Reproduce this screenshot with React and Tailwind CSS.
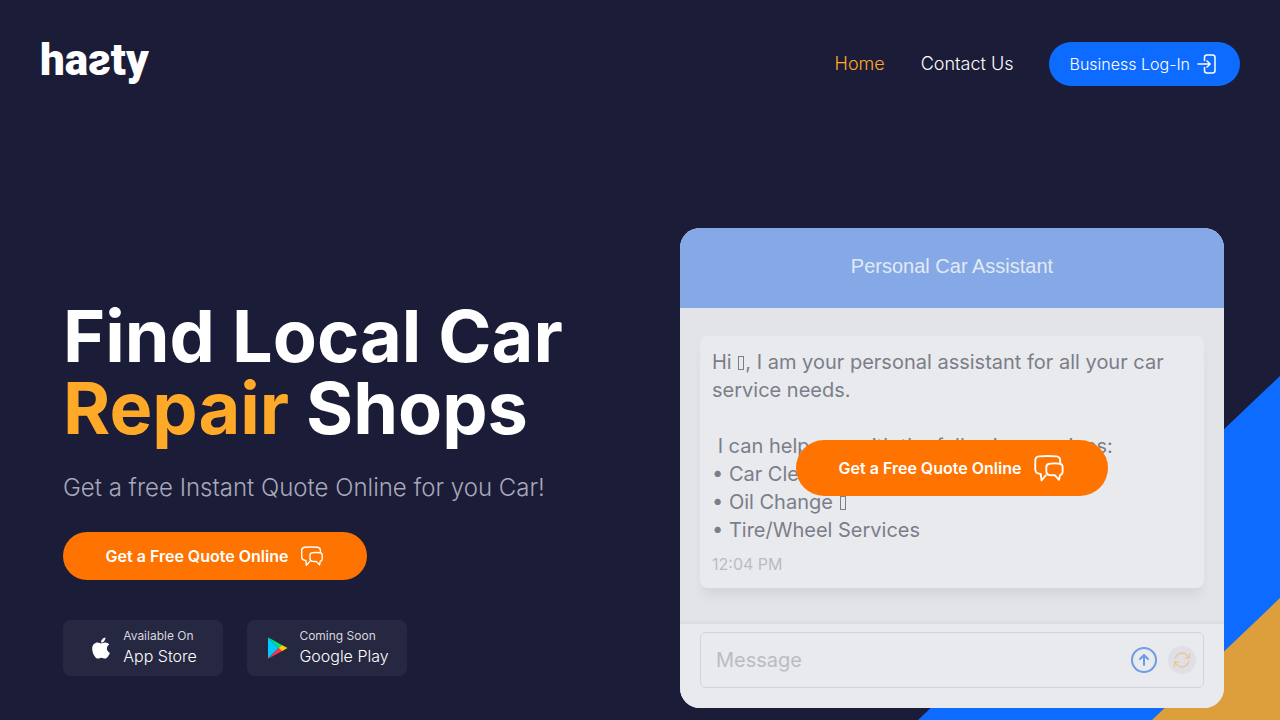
import React from "react";
import { FaApple } from "react-icons/fa";

function ChatBubbles({ className }) {
  return (
    <svg viewBox="0 0 24 24" className={className} fill="none" stroke="currentColor" strokeWidth="1.4" strokeLinecap="round" strokeLinejoin="round" aria-hidden="true">
      <path d="M20.400 8.400V6.500c0-2-1-3-2.900-3.200-4.200-.4-8.800-.4-13 0-1.900.2-2.800 1.300-2.800 3.200v6.500c0 2 .9 3.100 3 3.300l1.100.1.600 4.800 3.200-3.600" />
      <path d="M12.400 8.800c2.500-.4 5.200-.4 7.600 0 1.500.2 2.200 1 2.200 2.300v3.700c0 1.600-.6 2.200-1.900 2.400l-.8 3.700-3.200-3.500c-1.400.1-2.700 0-4-.1-1.600-.2-2.300-1-2.300-2.600v-3.500c0-1.400.9-2.200 2.400-2.400z" />
    </svg>
  );
}

function LoginIcon() {
  return (
    <svg viewBox="0 0 24 24" className="size-6" fill="none" stroke="currentColor" strokeWidth="1.5" strokeLinecap="round" strokeLinejoin="round" aria-hidden="true">
      <path d="M8.500 8.500V5.500c0-1.700.8-2.500 2.500-2.500h5.500c1.700 0 2.500.8 2.500 2.500v13c0 1.700-.8 2.500-2.500 2.500H11c-1.700 0-2.500-.8-2.500-2.500v-3" />
      <path d="M2 12h12M11 9l3.200 3-3.200 3" />
    </svg>
  );
}

function PlayIcon() {
  return (
    <svg viewBox="0 0 24 24" className="size-6" aria-hidden="true">
      <path d="M3 1.500 13.500 12 3 22.500z" fill="#00c8fa" />
      <path d="M3 1.200 16.800 8.900 13.500 12z" fill="#00e47a" />
      <path d="M16.800 8.900 22.500 12l-5.700 3.200L13.500 12z" fill="#ffce00" />
      <path d="M3 22.800 13.500 12l3.300 3.200z" fill="#f5364c" />
    </svg>
  );
}

function QuoteButton({ large }) {
  return (
    <button
      type="button"
      className={
        large
          ? "flex h-14 w-78 items-center justify-center gap-3 rounded-full bg-[#ff7300] font-semibold text-white whitespace-nowrap"
          : "flex h-12 w-76 items-center justify-center gap-3 rounded-full bg-[#ff7300] font-semibold text-white whitespace-nowrap"
      }
    >
      Get a Free Quote Online
      <ChatBubbles className={large ? "size-8" : "size-6"} />
    </button>
  );
}

function StoreBadge({ icon, caption, name }) {
  return (
    <a href="#" className="flex h-14 w-40 items-center justify-center gap-2.5 rounded-lg bg-[#262741] text-white">
      {icon}
      <span className="flex flex-col">
        <span className="text-xs leading-4 text-[#d6d6de]">{caption}</span>
        <span className="text-base leading-6 font-light">{name}</span>
      </span>
    </a>
  );
}

function Glyph() {
  return <span aria-hidden="true" className="mx-px inline-block h-3.5 w-1.5 border border-current align-[-1px]" />;
}

function ChatCard() {
  return (
    <section className="relative overflow-hidden rounded-[20px] bg-[#e2e4e8]">
      <h2 className="flex h-20 items-center justify-center bg-[#84a9e6] pb-1 font-['Liberation_Sans',sans-serif] text-xl text-[#e2e9f5]">
        Personal Car Assistant
      </h2>
      <div className="px-5 pt-7 pb-9">
        <div className="rounded-lg bg-[#e8eaee] p-3 shadow-[0_10px_12px_-3px_rgba(0,0,0,0.07)]">
          <p className="text-xl leading-7 whitespace-pre-wrap text-[#7b7e89]">
            Hi <Glyph />, I am your personal assistant for all your car service needs.
            {"\n\n I can help you with the following services:\n"}
            {"• Car Cleaning "}<Glyph />{"\n"}
            {"• Oil Change "}<Glyph />{"\n"}
            {"• Tire/Wheel Services"}
          </p>
          <p className="mt-2 text-base leading-6 text-[#b9bcc4]">12:04 PM</p>
        </div>
      </div>
      <form className="bg-[#e8eaee] px-5 pt-2 pb-5 shadow-[0_-1px_4px_rgba(0,0,0,0.06)]">
        <div className="flex h-14 items-center gap-2.5 rounded-md border border-[#d0d3d8] pr-[7px] pl-[15px]">
          <input
            aria-label="Message"
            placeholder="Message"
            className="min-w-0 flex-1 bg-transparent text-xl text-[#7b7e89] outline-none placeholder:text-[#b9bcc4]"
          />
          <button type="button" aria-label="Send" className="flex size-7 items-center justify-center text-[#6f9ce6]">
            <svg viewBox="0 0 28 28" className="size-7" fill="none" stroke="currentColor" strokeWidth="2" strokeLinecap="round" strokeLinejoin="round">
              <circle cx="14" cy="14" r="12" />
              <path d="M14 19V9.500M10 13l4-4 4 4" />
            </svg>
          </button>
          <button type="button" aria-label="Restart" className="flex size-7 items-center justify-center rounded-full bg-[#dfdfe5] text-[#e8c793]">
            <svg viewBox="0 0 24 24" className="size-5" fill="none" stroke="currentColor" strokeWidth="1.5" strokeLinecap="round" strokeLinejoin="round">
              <path d="M16.023 9.348h4.992V4.356M2.985 19.644v-4.992h4.992M2.985 14.652l3.181 3.183a8.250 8.250 0 0 0 13.803-3.700M4.031 9.865a8.250 8.250 0 0 1 13.803-3.700l3.181 3.183" />
            </svg>
          </button>
        </div>
      </form>
      <div className="absolute inset-0 flex items-center justify-center">
        <QuoteButton large />
      </div>
    </section>
  );
}

export default function App() {
  return (
    <div className="relative flex min-h-screen flex-col overflow-hidden bg-[#1b1c37] font-['Inter',sans-serif] text-white">
      <svg viewBox="0 0 362 344" className="absolute right-0 bottom-0 w-[362px]" aria-hidden="true">
        <path d="M0 344 362 0V344z" fill="#0d6bff" />
        <path d="M234 344 362 222V344z" fill="#dd9e3c" />
      </svg>

      <header className="relative flex items-center justify-between p-10">
        <a href="#" className="flex h-12 items-start font-['Roboto',sans-serif] text-[44px] leading-10 font-black">
          ha<span className="inline-block -scale-x-100">s</span>ty
        </a>
        <nav className="flex items-center gap-9 text-lg font-light">
          <a href="#" className="text-[#ffa928]">Home</a>
          <a href="#">Contact Us</a>
          <a href="#" className="flex h-11 items-center gap-1.5 rounded-full bg-[#0d6bff] px-5 text-base">
            Business Log-In
            <LoginIcon />
          </a>
        </nav>
      </header>

      <main className="relative grid grid-cols-2 gap-[73px] pt-[100px] pr-14 pb-3 pl-[63px]">
        <div className="flex flex-col items-start pt-[72px]">
          <h1 className="text-7xl leading-none font-bold">
            Find Local Car <br />
            <span className="text-[#ffa928]">Repair</span> Shops
          </h1>
          <p className="mt-7 text-2xl font-light text-[#a8a8ba]">Get a free Instant Quote Online for you Car!</p>
          <div className="mt-7">
            <QuoteButton />
          </div>
          <div className="mt-10 flex gap-6">
            <StoreBadge icon={<FaApple className="size-6" />} caption="Available On" name="App Store" />
            <StoreBadge icon={<PlayIcon />} caption="Coming Soon" name="Google Play" />
          </div>
        </div>
        <ChatCard />
      </main>
    </div>
  );
}
